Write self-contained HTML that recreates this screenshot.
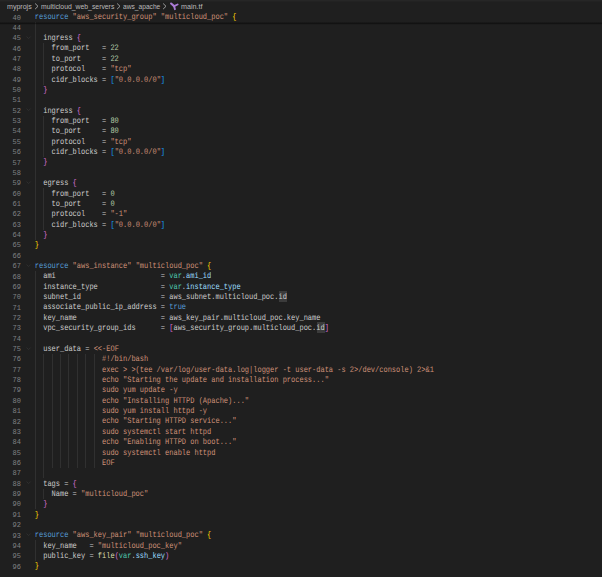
<!DOCTYPE html>
<html><head><meta charset="utf-8"><style>
html,body{margin:0;padding:0;}
body{width:602px;height:577px;overflow:hidden;background:#1f1f1f;position:relative;font-family:"Liberation Mono",monospace;}
.l{position:absolute;left:0;width:602px;height:10.36px;}
.n{position:absolute;right:581.00px;top:0.5px;line-height:10.36px;font-size:7.01px;color:#7f8184;text-align:right;white-space:pre;transform:scaleY(1.15);transform-origin:0 7.05px}
.c{position:absolute;left:34.80px;top:1.4px;line-height:10.36px;font-size:7.01px;white-space:pre;transform:scaleY(1.2);transform-origin:0 7.05px;text-rendering:geometricPrecision}
.gd{position:absolute;top:0;width:1px;height:10.36px;background:#303030;}
.fd{position:absolute;left:25px;top:0;width:8px;height:10px}
.kw{color:#569cd6}.str{color:#ce9178}.num{color:#b5cea8}.id{color:#cccccc}.var{color:#4ec9b0}.mem{color:#9cdcfe}
.b1{color:#ffd700}.b2{color:#da70d6}.b3{color:#179fff}.fn{color:#dcdcaa}.hl{color:#cccccc}
.hlb{position:absolute;top:-0.7px;height:10.6px;background:#3b3b3b}
#bc{position:absolute;left:0;top:0;width:602px;height:12px;font-family:"Liberation Sans",sans-serif;font-size:7.6px;color:#bababa;}
#bc span{position:absolute;top:1.3px;line-height:12px;white-space:pre;display:inline-block;transform-origin:0 0}
.chev{position:absolute;top:0}
#tficon{position:absolute;left:166px;top:0}
#shadow{position:absolute;left:0;top:22px;width:602px;height:3px;background:linear-gradient(rgba(0,0,0,.22) 0,rgba(0,0,0,.22) 1px,rgba(0,0,0,.42) 1px,rgba(0,0,0,.42) 2px,rgba(0,0,0,.1) 2px,rgba(0,0,0,.1) 3px);z-index:6}
#topband{position:absolute;left:0;top:0;width:602px;height:2px;background:linear-gradient(#262626 0,#262626 1px,#222 1px,#222 2px)}
#sticky{position:absolute;left:0;top:12px;width:602px;height:10.36px;background:#1f1f1f;z-index:5}
</style></head><body>
<div id="bc"><div id="topband"></div><span style="left:6.60px;transform:scaleX(0.930)">myprojs</span><span style="left:40.80px;transform:scaleX(0.900)">multicloud_web_servers</span><span style="left:122.80px;transform:scaleX(0.874)">aws_apache</span><span style="left:180.90px;transform:scaleX(0.947)">main.tf</span><svg class="chev" style="left:34.50px" width="5" height="12" viewBox="0 0 5 12"><polyline points="0.1,3.5 3.0,6.3 0.1,9.1" fill="none" stroke="#9c9c9c" stroke-width="1.0"/></svg><svg class="chev" style="left:116.60px" width="5" height="12" viewBox="0 0 5 12"><polyline points="0.1,3.5 3.0,6.3 0.1,9.1" fill="none" stroke="#9c9c9c" stroke-width="1.0"/></svg><svg class="chev" style="left:163.20px" width="5" height="12" viewBox="0 0 5 12"><polyline points="0.1,3.5 3.0,6.3 0.1,9.1" fill="none" stroke="#9c9c9c" stroke-width="1.0"/></svg><svg id="tficon" width="14" height="12" viewBox="166 0 14 12"><g stroke="#ab7bd6" stroke-linecap="round" fill="none"><line x1="171.1" y1="3.5" x2="174.1" y2="6.1" stroke-width="2.1"/><line x1="177.6" y1="4.5" x2="174.1" y2="6.1" stroke-width="1.9"/><line x1="174.1" y1="6.1" x2="174.9" y2="9.2" stroke-width="1.9"/></g></svg></div>
<div id="sticky"><div class="l" style="top:0px"><span class="n">40</span><span class="c"><span class="kw">resource</span><span class="id"> </span><span class="str">"aws_security_group"</span><span class="id"> </span><span class="str">"multicloud_poc"</span><span class="id"> </span><span class="b1">{</span></span></div>
</div>
<div class="l" style="top:22.36px"><div class="gd" style="left:34.80px"></div><span class="n">44</span><span class="c"></span></div>
<div class="l" style="top:32.72px"><div class="gd" style="left:34.80px"></div><svg class="fd" viewBox="0 0 8 10"><polyline points="1.6,3.6 3.6,5.6 5.6,3.6" fill="none" stroke="#303030" stroke-width="0.9"/></svg><span class="n">45</span><span class="c"><span class="id">  </span><span class="id">ingress </span><span class="b2">{</span></span></div>
<div class="l" style="top:43.08px"><div class="gd" style="left:34.80px"></div><div class="gd" style="left:43.22px"></div><span class="n">46</span><span class="c"><span class="id">    </span><span class="id">from_port   = </span><span class="num">22</span></span></div>
<div class="l" style="top:53.44px"><div class="gd" style="left:34.80px"></div><div class="gd" style="left:43.22px"></div><span class="n">47</span><span class="c"><span class="id">    </span><span class="id">to_port     = </span><span class="num">22</span></span></div>
<div class="l" style="top:63.80px"><div class="gd" style="left:34.80px"></div><div class="gd" style="left:43.22px"></div><span class="n">48</span><span class="c"><span class="id">    </span><span class="id">protocol    = </span><span class="str">"tcp"</span></span></div>
<div class="l" style="top:74.16px"><div class="gd" style="left:34.80px"></div><div class="gd" style="left:43.22px"></div><span class="n">49</span><span class="c"><span class="id">    </span><span class="id">cidr_blocks = </span><span class="b3">[</span><span class="str">"0.0.0.0/0"</span><span class="b3">]</span></span></div>
<div class="l" style="top:84.52px"><div class="gd" style="left:34.80px"></div><span class="n">50</span><span class="c"><span class="id">  </span><span class="b2">}</span></span></div>
<div class="l" style="top:94.88px"><div class="gd" style="left:34.80px"></div><span class="n">51</span><span class="c"></span></div>
<div class="l" style="top:105.24px"><div class="gd" style="left:34.80px"></div><svg class="fd" viewBox="0 0 8 10"><polyline points="1.6,3.6 3.6,5.6 5.6,3.6" fill="none" stroke="#303030" stroke-width="0.9"/></svg><span class="n">52</span><span class="c"><span class="id">  </span><span class="id">ingress </span><span class="b2">{</span></span></div>
<div class="l" style="top:115.60px"><div class="gd" style="left:34.80px"></div><div class="gd" style="left:43.22px"></div><span class="n">53</span><span class="c"><span class="id">    </span><span class="id">from_port   = </span><span class="num">80</span></span></div>
<div class="l" style="top:125.96px"><div class="gd" style="left:34.80px"></div><div class="gd" style="left:43.22px"></div><span class="n">54</span><span class="c"><span class="id">    </span><span class="id">to_port     = </span><span class="num">80</span></span></div>
<div class="l" style="top:136.32px"><div class="gd" style="left:34.80px"></div><div class="gd" style="left:43.22px"></div><span class="n">55</span><span class="c"><span class="id">    </span><span class="id">protocol    = </span><span class="str">"tcp"</span></span></div>
<div class="l" style="top:146.68px"><div class="gd" style="left:34.80px"></div><div class="gd" style="left:43.22px"></div><span class="n">56</span><span class="c"><span class="id">    </span><span class="id">cidr_blocks = </span><span class="b3">[</span><span class="str">"0.0.0.0/0"</span><span class="b3">]</span></span></div>
<div class="l" style="top:157.04px"><div class="gd" style="left:34.80px"></div><span class="n">57</span><span class="c"><span class="id">  </span><span class="b2">}</span></span></div>
<div class="l" style="top:167.40px"><div class="gd" style="left:34.80px"></div><span class="n">58</span><span class="c"></span></div>
<div class="l" style="top:177.76px"><div class="gd" style="left:34.80px"></div><svg class="fd" viewBox="0 0 8 10"><polyline points="1.6,3.6 3.6,5.6 5.6,3.6" fill="none" stroke="#303030" stroke-width="0.9"/></svg><span class="n">59</span><span class="c"><span class="id">  </span><span class="id">egress </span><span class="b2">{</span></span></div>
<div class="l" style="top:188.12px"><div class="gd" style="left:34.80px"></div><div class="gd" style="left:43.22px"></div><span class="n">60</span><span class="c"><span class="id">    </span><span class="id">from_port   = </span><span class="num">0</span></span></div>
<div class="l" style="top:198.48px"><div class="gd" style="left:34.80px"></div><div class="gd" style="left:43.22px"></div><span class="n">61</span><span class="c"><span class="id">    </span><span class="id">to_port     = </span><span class="num">0</span></span></div>
<div class="l" style="top:208.84px"><div class="gd" style="left:34.80px"></div><div class="gd" style="left:43.22px"></div><span class="n">62</span><span class="c"><span class="id">    </span><span class="id">protocol    = </span><span class="str">"-1"</span></span></div>
<div class="l" style="top:219.20px"><div class="gd" style="left:34.80px"></div><div class="gd" style="left:43.22px"></div><span class="n">63</span><span class="c"><span class="id">    </span><span class="id">cidr_blocks = </span><span class="b3">[</span><span class="str">"0.0.0.0/0"</span><span class="b3">]</span></span></div>
<div class="l" style="top:229.56px"><div class="gd" style="left:34.80px"></div><span class="n">64</span><span class="c"><span class="id">  </span><span class="b2">}</span></span></div>
<div class="l" style="top:239.92px"><span class="n">65</span><span class="c"><span class="b1">}</span></span></div>
<div class="l" style="top:250.28px"><span class="n">66</span><span class="c"></span></div>
<div class="l" style="top:260.64px"><svg class="fd" viewBox="0 0 8 10"><polyline points="1.6,3.6 3.6,5.6 5.6,3.6" fill="none" stroke="#303030" stroke-width="0.9"/></svg><span class="n">67</span><span class="c"><span class="kw">resource</span><span class="id"> </span><span class="str">"aws_instance"</span><span class="id"> </span><span class="str">"multicloud_poc"</span><span class="id"> </span><span class="b1">{</span></span></div>
<div class="l" style="top:271.00px"><div class="gd" style="left:34.80px"></div><span class="n">68</span><span class="c"><span class="id">  </span><span class="id">ami                         = </span><span class="var">var</span><span class="id">.</span><span class="mem">ami_id</span></span></div>
<div class="l" style="top:281.36px"><div class="gd" style="left:34.80px"></div><span class="n">69</span><span class="c"><span class="id">  </span><span class="id">instance_type               = </span><span class="var">var</span><span class="id">.</span><span class="mem">instance_type</span></span></div>
<div class="l" style="top:291.72px"><div class="gd" style="left:34.80px"></div><span class="n">70</span><div class="hlb" style="left:278.86px;width:8.42px"></div><span class="c"><span class="id">  </span><span class="id">subnet_id                   = aws_subnet.multicloud_poc.</span><span class="hl">id</span></span></div>
<div class="l" style="top:302.08px"><div class="gd" style="left:34.80px"></div><span class="n">71</span><span class="c"><span class="id">  </span><span class="id">associate_public_ip_address = </span><span class="kw">true</span></span></div>
<div class="l" style="top:312.44px"><div class="gd" style="left:34.80px"></div><span class="n">72</span><span class="c"><span class="id">  </span><span class="id">key_name                    = aws_key_pair.multicloud_poc.key_name</span></span></div>
<div class="l" style="top:322.80px"><div class="gd" style="left:34.80px"></div><span class="n">73</span><div class="hlb" style="left:316.74px;width:8.42px"></div><span class="c"><span class="id">  </span><span class="id">vpc_security_group_ids      = </span><span class="b2">[</span><span class="id">aws_security_group.multicloud_poc.</span><span class="hl">id</span><span class="b2">]</span></span></div>
<div class="l" style="top:333.16px"><div class="gd" style="left:34.80px"></div><span class="n">74</span><span class="c"></span></div>
<div class="l" style="top:343.52px"><div class="gd" style="left:34.80px"></div><svg class="fd" viewBox="0 0 8 10"><polyline points="1.6,3.6 3.6,5.6 5.6,3.6" fill="none" stroke="#303030" stroke-width="0.9"/></svg><span class="n">75</span><span class="c"><span class="id">  </span><span class="id">user_data = </span><span class="str">&lt;&lt;-EOF</span></span></div>
<div class="l" style="top:353.88px"><div class="gd" style="left:34.80px"></div><div class="gd" style="left:43.22px"></div><div class="gd" style="left:51.63px"></div><div class="gd" style="left:60.05px"></div><div class="gd" style="left:68.46px"></div><div class="gd" style="left:76.88px"></div><div class="gd" style="left:85.30px"></div><div class="gd" style="left:93.71px"></div><span class="n">76</span><span class="c"><span class="id">                </span><span class="str">#!/bin/bash</span></span></div>
<div class="l" style="top:364.24px"><div class="gd" style="left:34.80px"></div><div class="gd" style="left:43.22px"></div><div class="gd" style="left:51.63px"></div><div class="gd" style="left:60.05px"></div><div class="gd" style="left:68.46px"></div><div class="gd" style="left:76.88px"></div><div class="gd" style="left:85.30px"></div><div class="gd" style="left:93.71px"></div><span class="n">77</span><span class="c"><span class="id">                </span><span class="str">exec &gt; &gt;(tee /var/log/user-data.log|logger -t user-data -s 2&gt;/dev/console) 2&gt;&amp;1</span></span></div>
<div class="l" style="top:374.60px"><div class="gd" style="left:34.80px"></div><div class="gd" style="left:43.22px"></div><div class="gd" style="left:51.63px"></div><div class="gd" style="left:60.05px"></div><div class="gd" style="left:68.46px"></div><div class="gd" style="left:76.88px"></div><div class="gd" style="left:85.30px"></div><div class="gd" style="left:93.71px"></div><span class="n">78</span><span class="c"><span class="id">                </span><span class="str">echo "Starting the update and installation process..."</span></span></div>
<div class="l" style="top:384.96px"><div class="gd" style="left:34.80px"></div><div class="gd" style="left:43.22px"></div><div class="gd" style="left:51.63px"></div><div class="gd" style="left:60.05px"></div><div class="gd" style="left:68.46px"></div><div class="gd" style="left:76.88px"></div><div class="gd" style="left:85.30px"></div><div class="gd" style="left:93.71px"></div><span class="n">79</span><span class="c"><span class="id">                </span><span class="str">sudo yum update -y</span></span></div>
<div class="l" style="top:395.32px"><div class="gd" style="left:34.80px"></div><div class="gd" style="left:43.22px"></div><div class="gd" style="left:51.63px"></div><div class="gd" style="left:60.05px"></div><div class="gd" style="left:68.46px"></div><div class="gd" style="left:76.88px"></div><div class="gd" style="left:85.30px"></div><div class="gd" style="left:93.71px"></div><span class="n">80</span><span class="c"><span class="id">                </span><span class="str">echo "Installing HTTPD (Apache)..."</span></span></div>
<div class="l" style="top:405.68px"><div class="gd" style="left:34.80px"></div><div class="gd" style="left:43.22px"></div><div class="gd" style="left:51.63px"></div><div class="gd" style="left:60.05px"></div><div class="gd" style="left:68.46px"></div><div class="gd" style="left:76.88px"></div><div class="gd" style="left:85.30px"></div><div class="gd" style="left:93.71px"></div><span class="n">81</span><span class="c"><span class="id">                </span><span class="str">sudo yum install httpd -y</span></span></div>
<div class="l" style="top:416.04px"><div class="gd" style="left:34.80px"></div><div class="gd" style="left:43.22px"></div><div class="gd" style="left:51.63px"></div><div class="gd" style="left:60.05px"></div><div class="gd" style="left:68.46px"></div><div class="gd" style="left:76.88px"></div><div class="gd" style="left:85.30px"></div><div class="gd" style="left:93.71px"></div><span class="n">82</span><span class="c"><span class="id">                </span><span class="str">echo "Starting HTTPD service..."</span></span></div>
<div class="l" style="top:426.40px"><div class="gd" style="left:34.80px"></div><div class="gd" style="left:43.22px"></div><div class="gd" style="left:51.63px"></div><div class="gd" style="left:60.05px"></div><div class="gd" style="left:68.46px"></div><div class="gd" style="left:76.88px"></div><div class="gd" style="left:85.30px"></div><div class="gd" style="left:93.71px"></div><span class="n">83</span><span class="c"><span class="id">                </span><span class="str">sudo systemctl start httpd</span></span></div>
<div class="l" style="top:436.76px"><div class="gd" style="left:34.80px"></div><div class="gd" style="left:43.22px"></div><div class="gd" style="left:51.63px"></div><div class="gd" style="left:60.05px"></div><div class="gd" style="left:68.46px"></div><div class="gd" style="left:76.88px"></div><div class="gd" style="left:85.30px"></div><div class="gd" style="left:93.71px"></div><span class="n">84</span><span class="c"><span class="id">                </span><span class="str">echo "Enabling HTTPD on boot..."</span></span></div>
<div class="l" style="top:447.12px"><div class="gd" style="left:34.80px"></div><div class="gd" style="left:43.22px"></div><div class="gd" style="left:51.63px"></div><div class="gd" style="left:60.05px"></div><div class="gd" style="left:68.46px"></div><div class="gd" style="left:76.88px"></div><div class="gd" style="left:85.30px"></div><div class="gd" style="left:93.71px"></div><span class="n">85</span><span class="c"><span class="id">                </span><span class="str">sudo systemctl enable httpd</span></span></div>
<div class="l" style="top:457.48px"><div class="gd" style="left:34.80px"></div><div class="gd" style="left:43.22px"></div><div class="gd" style="left:51.63px"></div><div class="gd" style="left:60.05px"></div><div class="gd" style="left:68.46px"></div><div class="gd" style="left:76.88px"></div><div class="gd" style="left:85.30px"></div><div class="gd" style="left:93.71px"></div><span class="n">86</span><span class="c"><span class="id">                </span><span class="str">EOF</span></span></div>
<div class="l" style="top:467.84px"><div class="gd" style="left:34.80px"></div><div class="gd" style="left:43.22px"></div><span class="n">87</span><span class="c"></span></div>
<div class="l" style="top:478.20px"><div class="gd" style="left:34.80px"></div><svg class="fd" viewBox="0 0 8 10"><polyline points="1.6,3.6 3.6,5.6 5.6,3.6" fill="none" stroke="#303030" stroke-width="0.9"/></svg><span class="n">88</span><span class="c"><span class="id">  </span><span class="id">tags = </span><span class="b2">{</span></span></div>
<div class="l" style="top:488.56px"><div class="gd" style="left:34.80px"></div><div class="gd" style="left:43.22px"></div><span class="n">89</span><span class="c"><span class="id">    </span><span class="id">Name = </span><span class="str">"multicloud_poc"</span></span></div>
<div class="l" style="top:498.92px"><div class="gd" style="left:34.80px"></div><span class="n">90</span><span class="c"><span class="id">  </span><span class="b2">}</span></span></div>
<div class="l" style="top:509.28px"><span class="n">91</span><span class="c"><span class="b1">}</span></span></div>
<div class="l" style="top:519.64px"><span class="n">92</span><span class="c"></span></div>
<div class="l" style="top:530.00px"><svg class="fd" viewBox="0 0 8 10"><polyline points="1.6,3.6 3.6,5.6 5.6,3.6" fill="none" stroke="#303030" stroke-width="0.9"/></svg><span class="n">93</span><span class="c"><span class="kw">resource</span><span class="id"> </span><span class="str">"aws_key_pair"</span><span class="id"> </span><span class="str">"multicloud_poc"</span><span class="id"> </span><span class="b1">{</span></span></div>
<div class="l" style="top:540.36px"><div class="gd" style="left:34.80px"></div><span class="n">94</span><span class="c"><span class="id">  </span><span class="id">key_name   = </span><span class="str">"multicloud_poc_key"</span></span></div>
<div class="l" style="top:550.72px"><div class="gd" style="left:34.80px"></div><span class="n">95</span><span class="c"><span class="id">  </span><span class="id">public_key = </span><span class="fn">file</span><span class="b2">(</span><span class="var">var</span><span class="id">.</span><span class="mem">ssh_key</span><span class="b2">)</span></span></div>
<div class="l" style="top:561.08px"><span class="n">96</span><span class="c"><span class="b1">}</span></span></div>
<div id="shadow"></div>
</body></html>
